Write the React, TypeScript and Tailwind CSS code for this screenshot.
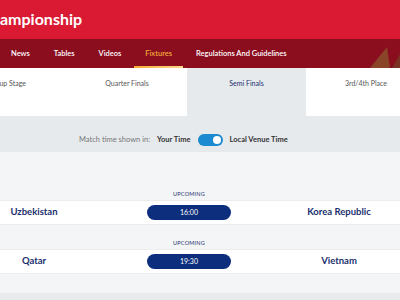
import React from "react";

const font = { fontFamily: "Lato, 'Open Sans', sans-serif" };

function Match({ home, away, time }: { home: string; away: string; time: string }) {
  return (
    <div>
      <div className="h-[24px] flex items-end pb-[2px]">
        <div className="w-[378px] text-center text-[5.5px] tracking-[0.2px] text-[#1a2f6e] uppercase">Upcoming</div>
      </div>
      <div className="h-[25px] bg-white border-y border-[#ececec] flex items-center">
        <div className="w-[68px] shrink-0 text-center text-[9.5px] font-bold text-[#1a2f6e]">{home}</div>
        <div className="w-[79px] shrink-0" />
        <div className="w-[84px] shrink-0 h-[15px] rounded-full bg-[#0c2e7d] flex items-center justify-center text-[7px] text-white">{time}</div>
        <div className="w-[216px] shrink-0 text-center text-[9.5px] font-bold text-[#1a2f6e]">{away}</div>
      </div>
    </div>
  );
}

export default function App() {
  return (
    <div className="w-[400px] h-[300px] overflow-hidden bg-[#f4f5f6]" style={font}>
      <div className="h-[39px] bg-[#d91a32] flex items-center">
        <div className="text-white font-bold text-[16px] leading-none -mt-[1px]">ampionship</div>
      </div>
      <div className="h-[29px] bg-[#8b0e1f] relative flex items-stretch overflow-hidden">
        {["News", "Tables", "Videos", "Fixtures", "Regulations And Guidelines"].map((t) => (
          <div key={t} className="relative px-[11px] flex items-center mr-[2px]">
            <span className={"text-[7.5px] font-semibold " + (t === "Fixtures" ? "text-[#f3a93a]" : "text-white")}>{t}</span>
            {t === "Fixtures" && (
              <div className="absolute left-0 right-0 bottom-0 h-[2px] bg-gradient-to-r from-[#f5ab2c] to-[#fcd98a]" />
            )}
          </div>
        ))}
        <svg className="absolute right-0 bottom-0" width="30" height="22" viewBox="0 0 30 22">
          <polygon points="0,22 17,1 20,22" fill="#8a4428" />
          <polygon points="22,22 30,8 30,22" fill="#7a3224" />
        </svg>
      </div>
      <div className="h-[48px] bg-[#e6eaed] flex overflow-hidden">
        <div className="w-[120px] shrink-0 -ml-[53px] bg-white pt-[10px] text-center text-[7px] text-[#555]">Group Stage</div>
        <div className="w-[120px] shrink-0 bg-white pt-[10px] text-center text-[7px] text-[#555]">Quarter Finals</div>
        <div className="w-[119px] shrink-0 bg-[#e6eaed] pt-[10px] text-center text-[7px] text-[#1a2f6e]">Semi Finals</div>
        <div className="w-[120px] shrink-0 bg-white pt-[10px] text-center text-[7px] text-[#555]">3rd/4th Place</div>
      </div>
      <div className="h-[36px] bg-[#e6eaed] flex items-center pt-[11px]">
        <div className="ml-[79px] text-[7.5px] text-[#777]">Match time shown in:</div>
        <div className="ml-[7px] text-[7.5px] font-bold text-[#333]">Your Time</div>
        <div className="ml-[7px] w-[25px] h-[12px] rounded-full bg-[#1b8ad0] relative">
          <div className="absolute right-[2px] top-[2px] w-[8px] h-[8px] rounded-full bg-white" />
        </div>
        <div className="ml-[7px] text-[7.5px] font-bold text-[#333]">Local Venue Time</div>
      </div>
      <div className="pt-[24px]">
        <Match home="Uzbekistan" away="Korea Republic" time="16:00" />
        <Match home="Qatar" away="Vietnam" time="19:30" />
      </div>
      <div className="mt-[19px] h-[10px] bg-[#e8ebee]" />
    </div>
  );
}
